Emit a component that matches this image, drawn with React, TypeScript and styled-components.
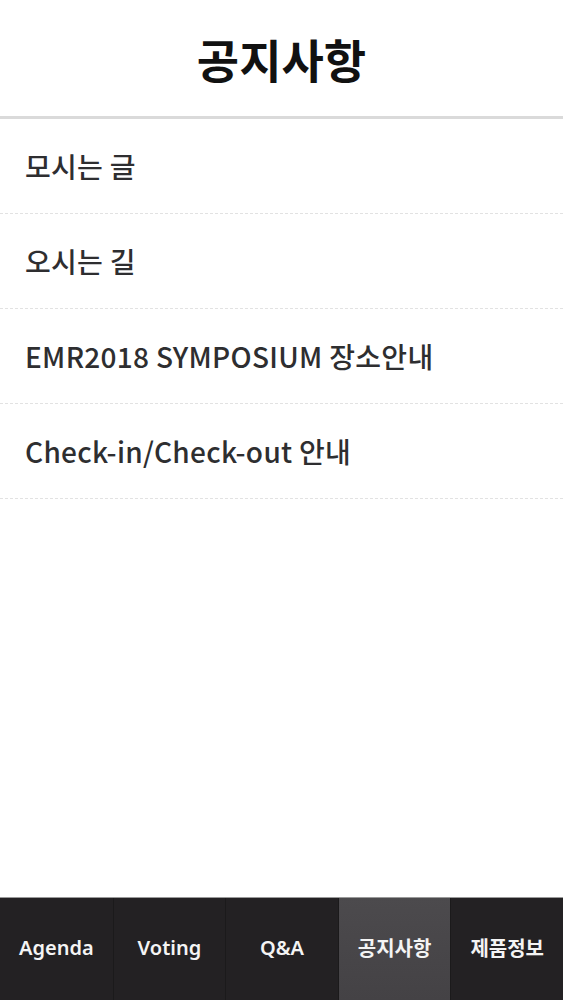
import React from "react";
import styled, { createGlobalStyle } from "styled-components";

const GlobalStyle = createGlobalStyle`
  html, body {
    margin: 0;
    padding: 0;
    background: #fff;
  }
  body {
    font-family: "Noto Sans CJK KR", "Noto Sans", sans-serif;
  }
`;

const Page = styled.div`
  display: flex;
  flex-direction: column;
  height: 1000px;
  background: #fff;
`;

const Header = styled.header`
  height: 116px;
  display: flex;
  align-items: center;
  justify-content: center;
  border-bottom: 3px solid #dadada;
`;

const Title = styled.h1`
  margin: 0;
  font-size: 46px;
  font-weight: 700;
  color: #111;
`;

const List = styled.ul`
  list-style: none;
  margin: 0;
  padding: 0;
  flex: 1;
`;

const Item = styled.li`
  height: 94px;
  display: flex;
  align-items: center;
  padding: 0 25px;
  border-bottom: 1px dashed #e2e2e2;
  font-size: 28px;
  font-weight: 500;
  color: #2e2e30;
  letter-spacing: 0.3px;
`;

const Nav = styled.nav`
  height: 102px;
  display: grid;
  grid-template-columns: repeat(5, 1fr);
  background: #232123;
  border-top: 1px solid #9a9a9a;
`;

const Tab = styled.div<{ $active?: boolean }>`
  display: flex;
  align-items: center;
  justify-content: center;
  padding-bottom: 4px;
  background: ${(p) =>
    p.$active ? "linear-gradient(#4c4a4d, #444245)" : "#232123"};
  border-left: 1px solid #1b1a1b;
  color: #f4f4f4;
  font-family: "Noto Sans", "Noto Sans CJK KR", sans-serif;
  font-size: 20px;
  font-weight: 600;
  &:first-child {
    border-left: none;
  }
`;

const notices = [
  "모시는 글",
  "오시는 길",
  "EMR2018 SYMPOSIUM 장소안내",
  "Check-in/Check-out 안내",
];

const tabs = ["Agenda", "Voting", "Q&A", "공지사항", "제품정보"];

export default function App() {
  return (
    <Page>
      <GlobalStyle />
      <Header>
        <Title>공지사항</Title>
      </Header>
      <List>
        {notices.map((n) => (
          <Item key={n}>{n}</Item>
        ))}
      </List>
      <Nav>
        {tabs.map((t) => (
          <Tab key={t} $active={t === "공지사항"}>
            {t}
          </Tab>
        ))}
      </Nav>
    </Page>
  );
}
